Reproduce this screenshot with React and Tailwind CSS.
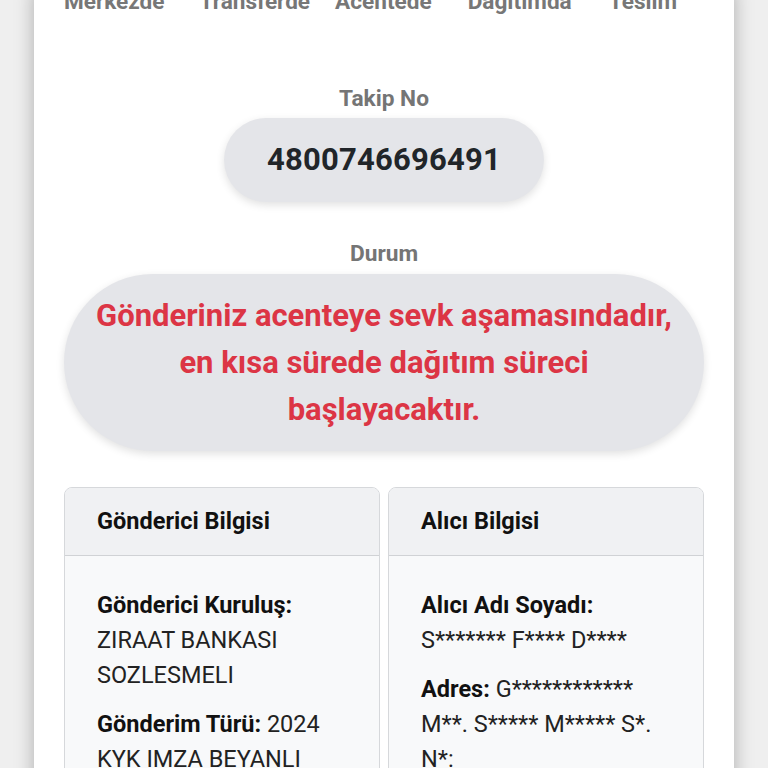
import React from 'react';

const steps = [
    { label: 'Merkezde', gap: '' },
    { label: 'Transferde', gap: 'ml-[35px]' },
    { label: 'Acentede', gap: 'ml-[25px]' },
    { label: 'Dağıtımda', gap: 'ml-[36px]' },
    { label: 'Teslim', gap: 'ml-[37px]' },
];

const InfoCard = ({ title, children }) => (
    <div className="flex-1 rounded-lg border border-[#d6d8db] overflow-hidden bg-[#f8f9fa]">
        <div className="h-[68px] flex items-center px-8 bg-[#f0f1f3] border-b border-[#d0d2d5]">
            <span className="text-[23.5px] font-bold text-[#111]">{title}</span>
        </div>
        <div className="px-8 pt-8 pb-8 text-[23.5px] leading-[35px] text-[#222] flex flex-col gap-[14px]">
            {children}
        </div>
    </div>
);

const App = () => {
    return (
        <div className="min-h-screen bg-[#efefef] px-[34px] overflow-hidden" style={{ fontFamily: 'Roboto, "Noto Sans", sans-serif' }}>
            <div className="bg-white min-h-screen px-[30px] pb-10 shadow-[0_0_18px_rgba(0,0,0,0.28)]">

                {/* Steps (cut off at the top) */}
                <div className="flex -mt-[11px] text-[22.6px] leading-[26px] font-bold text-[#777]">
                    {steps.map((s) => (
                        <span key={s.label} className={s.gap}>{s.label}</span>
                    ))}
                </div>

                {/* Tracking number */}
                <div className="mt-[71px] flex flex-col items-center">
                    <span className="text-[22.7px] leading-[26px] font-bold text-[#757575]">Takip No</span>
                    <div className="mt-[6px] w-[320px] h-[84px] rounded-full bg-[#e4e5e9] shadow-[0_3px_8px_rgba(0,0,0,0.12)] flex items-center justify-center">
                        <span className="text-[31px] font-bold text-[#212529] tracking-[0.2px]">4800746696491</span>
                    </div>
                </div>

                {/* Status */}
                <div className="mt-[39px] flex flex-col items-center">
                    <span className="text-[22.7px] leading-[26px] font-bold text-[#757575]">Durum</span>
                    <div className="mt-[7px] w-full rounded-full bg-[#e4e5e9] shadow-[0_3px_8px_rgba(0,0,0,0.12)] px-4 py-[18px] text-center">
                        <p className="text-[31px] leading-[47px] font-bold text-[#dc3545]">
                            Gönderiniz acenteye sevk aşamasındadır,<br />
                            en kısa sürede dağıtım süreci<br />
                            başlayacaktır.
                        </p>
                    </div>
                </div>

                {/* Sender / receiver */}
                <div className="mt-9 flex gap-[8px]">
                    <InfoCard title="Gönderici Bilgisi">
                        <p><b className="font-bold text-[#111]">Gönderici Kuruluş:</b> ZIRAAT BANKASI SOZLESMELI</p>
                        <p><b className="font-bold text-[#111]">Gönderim Türü:</b> 2024 KYK IMZA BEYANLI</p>
                    </InfoCard>
                    <InfoCard title="Alıcı Bilgisi">
                        <p><b className="font-bold text-[#111]">Alıcı Adı Soyadı:</b><br />S******* F**** D****</p>
                        <p><b className="font-bold text-[#111]">Adres:</b> G************ M**. S***** M***** S*. N*:</p>
                    </InfoCard>
                </div>
            </div>
        </div>
    );
};

export default App;
